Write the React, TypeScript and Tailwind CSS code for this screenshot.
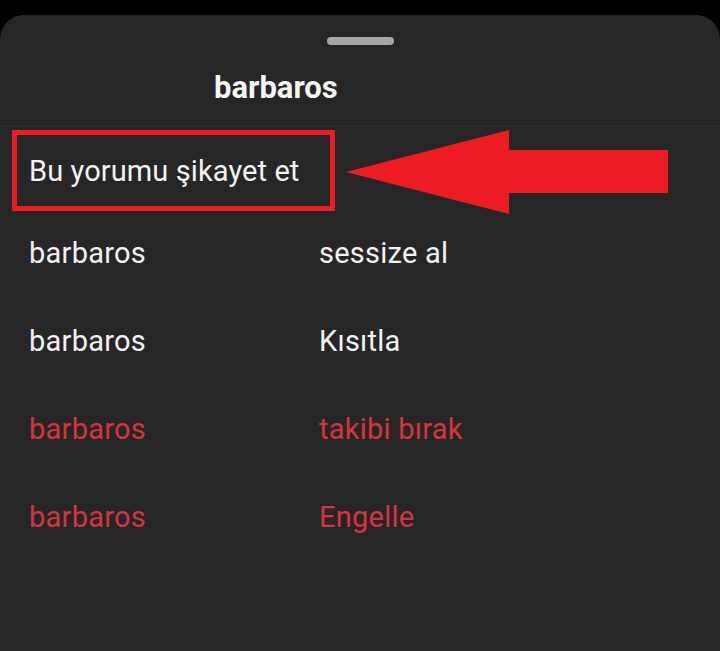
import React from "react";

const rows = [
  { left: "barbaros", right: "sessize al", danger: false },
  { left: "barbaros", right: "Kısıtla", danger: false },
  { left: "barbaros", right: "takibi bırak", danger: true },
  { left: "barbaros", right: "Engelle", danger: true },
];

const App = () => {
  return (
    <div
      className="w-[720px] h-[651px] bg-black flex flex-col overflow-hidden"
      style={{ fontFamily: "Roboto, 'Noto Sans', sans-serif" }}
    >
      <div className="h-[15px] shrink-0" />
      <div className="flex-1 flex flex-col bg-[#262626] rounded-t-[24px]">
        {/* drag handle */}
        <div className="mt-[22px] mx-auto h-[8px] w-[67px] rounded-full bg-[#a6a6a6]" />

        <div className="mt-[26px] pl-[214px] text-[31px] leading-[34px] font-bold text-[#f5f5f5]">
          barbaros
        </div>

        <div className="mt-[21px] h-px bg-[#2f2f2f]" />

        <div className="relative mt-[3px]">
          <div className="ml-[12px] w-[323px] h-[81px] border-[5px] border-[#ed1c24] flex items-center pl-[12px]">
            <span className="text-[29px] leading-[34px] tracking-[0.1px] text-[#f2f2f2]">
              Bu yorumu şikayet et
            </span>
          </div>
          {/* arrow annotation */}
          <svg
            className="absolute left-[346px] top-0"
            width="322"
            height="84"
            viewBox="0 0 322 84"
          >
            <polygon
              points="0,42 163,0 163,20 322,20 322,63 163,63 163,84"
              fill="#ed1c24"
            />
          </svg>
        </div>

        <div className="flex flex-col">
          {rows.map((row, i) => (
            <div
              key={i}
              className={`h-[88px] pt-[25px] grid grid-cols-[290px_1fr] pl-[29px] text-[29px] leading-[34px] tracking-[0.25px] ${
                row.danger ? "text-[#d63341]" : "text-[#f2f2f2]"
              }`}
            >
              <div>{row.left}</div>
              <div>{row.right}</div>
            </div>
          ))}
        </div>
      </div>
    </div>
  );
};

export default App;
